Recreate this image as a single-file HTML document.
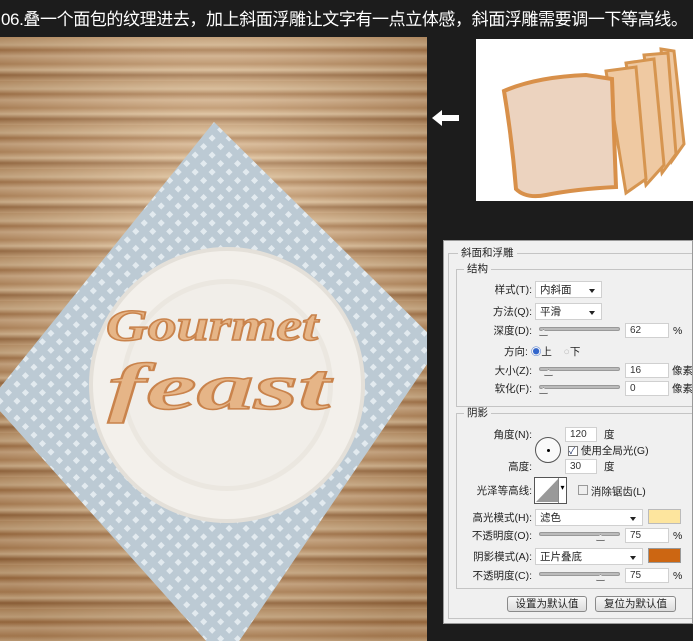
<!DOCTYPE html>
<html><head><meta charset="utf-8"><style>
*{margin:0;padding:0;box-sizing:border-box}
body{width:693px;height:641px;background:#1c1c1c;position:relative;overflow:hidden;font-family:"Liberation Sans","Noto Sans CJK SC",sans-serif}
.a{position:absolute}
.t{font-size:10.5px;color:#222;white-space:nowrap;line-height:12px}
.lab{text-align:right;width:88px}
.inp{background:#fff;border:1px solid #d0d0d0;height:15px;font-size:10px;line-height:12px;padding:1px 0 0 4px;color:#333}
.dd{background:#fff;border:1px solid #d0d0d0;height:17px;font-size:10.5px;line-height:12px;padding:2px 4px;color:#222}
.dd:after{content:"";position:absolute;right:6px;top:7px;border:3px solid transparent;border-top:4px solid #222}
.sl{height:4px;background:#bbb;border:1px solid #999;border-radius:2px}
.th{width:9px;height:7px;background:#eee;border:1px solid #777;clip-path:polygon(50% 0,100% 100%,0 100%)}
.fs{border:1px solid #c4c4c4}
.btn{border:1px solid #8a8a8a;border-radius:3px;background:linear-gradient(#f8f8f8,#dcdcdc);height:16px;font-size:10.5px;text-align:center;line-height:14px;color:#222}
</style></head><body>
<div class="a" style="left:1px;top:5px;font-size:17px;color:#fff;white-space:nowrap;letter-spacing:-0.4px">06.叠一个面包的纹理进去，加上斜面浮雕让文字有一点立体感，斜面浮雕需要调一下等高线。</div>

<div class="a" style="left:0;top:37px;width:427px;height:604px;overflow:hidden;background:repeating-linear-gradient(180deg,#c49c70 0,#dcbf98 8px,#a9794c 13px,#d8b791 19px,#bb8f62 27px,#e2c6a0 33px,#9c6e44 38px,#cfaa80 44px)">
 <div class="a" style="left:0;top:0;width:427px;height:604px;background:radial-gradient(ellipse at 50% 35%,rgba(255,240,220,.35),rgba(80,40,10,.25) 90%)"></div>
 <svg class="a" style="left:0;top:0" width="427" height="604">
  <defs><pattern id="p" width="12" height="12" patternUnits="userSpaceOnUse" patternTransform="rotate(45)"><rect width="12" height="12" fill="#bccad4"/><rect x="3" y="3" width="5" height="5" fill="#e2eaef"/></pattern></defs>
  <polygon points="214,85 440,308 225,625 -10,363" fill="url(#p)"/>
  <circle cx="227" cy="348" r="138" fill="#e4e0d9"/>
  <circle cx="227" cy="348" r="134" fill="#f3f0eb"/>
  <circle cx="227" cy="348" r="106" fill="#ebe7e0"/>
  <circle cx="227" cy="348" r="101" fill="#f1eee9"/>
  <text x="106" y="303" font-family="Liberation Serif,serif" font-style="italic" font-weight="bold" font-size="44" fill="#e6b587" stroke="#c9834c" stroke-width="1.5" textLength="212" lengthAdjust="spacingAndGlyphs">Gourmet</text>
  <text x="108" y="372" font-family="Liberation Serif,serif" font-style="italic" font-weight="bold" font-size="66" fill="#e6b587" stroke="#c9834c" stroke-width="1.5" textLength="222" lengthAdjust="spacingAndGlyphs">feast</text>
 </svg>
</div>

<svg class="a" style="left:432px;top:110px" width="28" height="16"><polygon points="0,8 10,0 10,5 27,5 27,11 10,11 10,16" fill="#fff"/></svg>

<div class="a" style="left:476px;top:39px;width:217px;height:162px;background:#fff;overflow:hidden">
 <svg width="217" height="162">
  <g fill="#efc9a2" stroke="#d69550" stroke-width="3">
   <path d="M185,10 L198,12 L208,105 L196,122 Z"/>
   <path d="M168,16 L192,14 L200,115 L186,134 Z"/>
   <path d="M150,24 L178,20 L188,126 L170,146 Z"/>
   <path d="M130,32 L160,28 L170,140 L150,154 Z"/>
  </g>
  <path d="M28,52 Q60,38 110,36 L136,40 L140,148 Q100,150 70,156 Q50,160 40,150 Q36,100 28,52 Z" fill="#ecd3bf" stroke="#d8904a" stroke-width="4"/>
 </svg>
</div>

<div class="a" style="left:443px;top:240px;width:250px;height:384px;background:#f0f0f0;border:1px solid #9a9a9a;overflow:hidden">
 <div class="a fs" style="left:4px;top:12px;width:250px;height:366px"></div>
 <div class="a t" style="left:14px;top:6px;background:#f0f0f0;padding:0 3px">斜面和浮雕</div>
 <div class="a fs" style="left:12px;top:28px;width:240px;height:138px"></div>
 <div class="a t" style="left:20px;top:22px;background:#f0f0f0;padding:0 3px">结构</div>

 <div class="a t lab" style="left:0;top:43px">样式(T):</div><div class="a dd" style="left:91px;top:40px;width:67px">内斜面</div>
 <div class="a t lab" style="left:0;top:65px">方法(Q):</div><div class="a dd" style="left:91px;top:62px;width:67px">平滑</div>
 <div class="a t lab" style="left:0;top:84px">深度(D):</div><div class="a sl" style="left:95px;top:86px;width:81px"></div><div class="a th" style="left:95px;top:88px"></div><div class="a inp" style="left:181px;top:82px;width:44px">62</div><div class="a t" style="left:229px;top:84px">%</div>
 <div class="a t" style="left:60px;top:105px">方向: <span style="color:#36c">◉</span>上 &nbsp;&nbsp; <span style="color:#bbb">○</span>下</div>
 <div class="a t lab" style="left:0;top:124px">大小(Z):</div><div class="a sl" style="left:95px;top:126px;width:81px"></div><div class="a th" style="left:100px;top:128px"></div><div class="a inp" style="left:181px;top:122px;width:44px">16</div><div class="a t" style="left:228px;top:124px">像素</div>
 <div class="a t lab" style="left:0;top:142px">软化(F):</div><div class="a sl" style="left:95px;top:144px;width:81px"></div><div class="a th" style="left:95px;top:146px"></div><div class="a inp" style="left:181px;top:140px;width:44px">0</div><div class="a t" style="left:228px;top:142px">像素</div>

 <div class="a fs" style="left:12px;top:172px;width:240px;height:176px"></div>
 <div class="a t" style="left:20px;top:166px;background:#f0f0f0;padding:0 3px">阴影</div>
 <div class="a t lab" style="left:0;top:188px">角度(N):</div>
 <div class="a" style="left:91px;top:196px;width:26px;height:26px;border:1px solid #555;border-radius:50%;background:#fafafa"><div class="a" style="left:11px;top:11px;width:3px;height:3px;background:#000;border-radius:50%"></div></div>
 <div class="a inp" style="left:121px;top:186px;width:32px">120</div><div class="a t" style="left:160px;top:188px">度</div>
 <div class="a t" style="left:124px;top:204px"><span style="display:inline-block;width:10px;height:10px;border:1px solid #777;background:#fff;font-size:9px;line-height:9px;color:#236">✓</span> 使用全局光(G)</div>
 <div class="a t lab" style="left:0;top:220px">高度:</div>
 <div class="a inp" style="left:121px;top:218px;width:32px">30</div><div class="a t" style="left:160px;top:220px">度</div>
 <div class="a t lab" style="left:0;top:244px">光泽等高线:</div>
 <div class="a" style="left:90px;top:236px;width:33px;height:27px;background:#fff;border:1px solid #555"><svg width="24" height="25"><polygon points="1,24 23,1 23,24" fill="#999"/></svg><div class="a" style="right:0;top:0;width:8px;height:25px;border-left:1px solid #888;font-size:8px;text-align:center;line-height:20px">▾</div></div>
 <div class="a t" style="left:134px;top:244px"><span style="display:inline-block;width:10px;height:10px;border:1px solid #999;background:#eee"></span> 消除锯齿(L)</div>
 <div class="a t lab" style="left:0;top:271px">高光模式(H):</div><div class="a dd" style="left:91px;top:268px;width:108px">滤色</div><div class="a" style="left:204px;top:268px;width:33px;height:15px;background:#fde59e;border:1px solid #bbb"></div>
 <div class="a t lab" style="left:0;top:289px">不透明度(O):</div><div class="a sl" style="left:95px;top:291px;width:81px"></div><div class="a th" style="left:152px;top:293px"></div><div class="a inp" style="left:181px;top:287px;width:44px">75</div><div class="a t" style="left:229px;top:289px">%</div>
 <div class="a t lab" style="left:0;top:310px">阴影模式(A):</div><div class="a dd" style="left:91px;top:307px;width:108px">正片叠底</div><div class="a" style="left:204px;top:307px;width:33px;height:15px;background:#cc6612;border:1px solid #999"></div>
 <div class="a t lab" style="left:0;top:329px">不透明度(C):</div><div class="a sl" style="left:95px;top:331px;width:81px"></div><div class="a th" style="left:152px;top:333px"></div><div class="a inp" style="left:181px;top:327px;width:44px">75</div><div class="a t" style="left:229px;top:329px">%</div>

 <div class="a btn" style="left:63px;top:355px;width:80px">设置为默认值</div>
 <div class="a btn" style="left:151px;top:355px;width:81px">复位为默认值</div>
</div>
</body></html>
